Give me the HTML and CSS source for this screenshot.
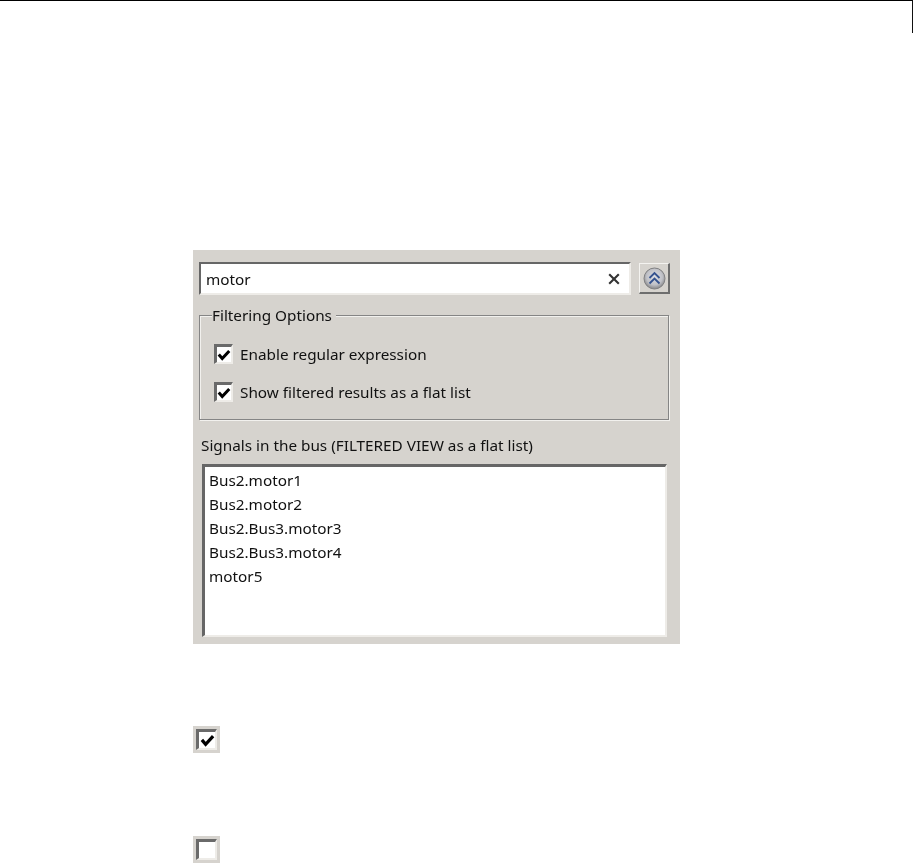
FILE: index.html
```html
<!DOCTYPE html>
<html lang="en">
<head>
    <meta charset="UTF-8">
    <title>Signals in the bus</title>
    <link rel="stylesheet" href="styles.css">
</head>
<body>
    <header class="page-head"></header>
    <main class="content">
        <div class="panel">
            <div class="search-row">
                <div class="search-box">
                    <span class="search-text">motor</span>
                    <svg class="clear-icon" width="12" height="12" viewBox="0 0 12 12">
                        <path d="M1.2 1.2 L10.8 10.8 M10.8 1.2 L1.2 10.8" stroke="#333" stroke-width="2.1" fill="none"/>
                    </svg>
                </div>
                <button class="collapse-btn">
                    <svg width="23" height="23" viewBox="0 0 23 23">
                        <defs>
                            <radialGradient id="knob" cx="50%" cy="42%" r="58%">
                                <stop offset="0" stop-color="#dcdde3"/>
                                <stop offset="0.65" stop-color="#c0c1c7"/>
                                <stop offset="1" stop-color="#858587"/>
                            </radialGradient>
                        </defs>
                        <circle cx="11.5" cy="11.5" r="10.5" fill="url(#knob)" stroke="#808082" stroke-width="1"/>
                        <path d="M6.5 11 L11.5 6 L16.5 11 M6.5 16.5 L11.5 11.5 L16.5 16.5" stroke="#34528f" stroke-width="1.8" fill="none"/>
                    </svg>
                </button>
            </div>

            <fieldset class="options">
                <legend>Filtering Options</legend>
                <label class="option">
                    <span class="check check-small">
                        <svg width="14" height="14" viewBox="0 0 12 12"><path d="M1.5 5.5 L4.5 9 L10.5 2.5" stroke="#000" stroke-width="2.6" fill="none"/></svg>
                    </span>
                    Enable regular expression
                </label>
                <label class="option">
                    <span class="check check-small">
                        <svg width="14" height="14" viewBox="0 0 12 12"><path d="M1.5 5.5 L4.5 9 L10.5 2.5" stroke="#000" stroke-width="2.6" fill="none"/></svg>
                    </span>
                    Show filtered results as a flat list
                </label>
            </fieldset>

            <div class="list-title">Signals in the bus (FILTERED VIEW as a flat list)</div>
            <ul class="signal-list">
                <li>Bus2.motor1</li>
                <li>Bus2.motor2</li>
                <li>Bus2.Bus3.motor3</li>
                <li>Bus2.Bus3.motor4</li>
                <li>motor5</li>
            </ul>
        </div>

        <div class="big-check big-check-first">
            <span class="check">
                <svg width="15" height="15" viewBox="0 0 12 12"><path d="M1.5 5.5 L4.5 9 L10.5 2.5" stroke="#000" stroke-width="2.6" fill="none"/></svg>
            </span>
        </div>
        <div class="big-check big-check-second">
            <span class="check"></span>
        </div>
    </main>
</body>
</html>
```

FILE: styles.css
```css
html, body {
    margin: 0;
    height: 863px;
    overflow: hidden;
    background-color: #fff;
}

body {
    font-family: "Noto Sans", sans-serif;
    color: #111;
}

.page-head {
    box-sizing: border-box;
    height: 33px;
    border-top: 1px solid #000;
    border-right: 1px solid #111;
}

.content {
    padding-left: 193px;
}

.panel {
    box-sizing: border-box;
    width: 487px;
    height: 394px;
    margin-top: 217px;
    padding: 12px 10px 0 6px;
    background-color: #d6d3ce;
    overflow: hidden;
    font-size: 15.3px;
    filter: blur(0.35px);
}

.search-row {
    display: flex;
    align-items: center;
    gap: 8px;
}

.search-box {
    box-sizing: border-box;
    width: 433px;
    height: 33px;
    display: flex;
    align-items: center;
    justify-content: space-between;
    padding: 0 9px 0 5px;
    background-color: #fff;
    border-top: 2px solid #666;
    border-left: 2px solid #666;
    border-right: 2px solid #eeece8;
    border-bottom: 2px solid #eeece8;
}

.collapse-btn {
    box-sizing: border-box;
    width: 31px;
    height: 31px;
    padding: 0;
    display: flex;
    align-items: center;
    justify-content: center;
    background-color: #d6d3ce;
    border-top: 1px solid #f4f3f0;
    border-left: 1px solid #f4f3f0;
    border-right: 2px solid #6e6e6e;
    border-bottom: 2px solid #6e6e6e;
}

.options {
    box-sizing: border-box;
    width: 470px;
    height: 113px;
    margin: 12px 0 0 0;
    padding: 20px 0 0 14px;
    border: 1px solid #858585;
    box-shadow: inset 1px 1px #f2f1ee, 1px 1px #f2f1ee;
}

.options legend {
    padding: 0 4px 0 0;
    margin-left: -2px;
    line-height: 17px;
    background-color: #d6d3ce;
}

.option {
    display: flex;
    align-items: center;
    gap: 7px;
    height: 20px;
    margin-bottom: 18px;
}

.check {
    box-sizing: border-box;
    display: flex;
    align-items: center;
    justify-content: center;
    width: 21px;
    height: 21px;
    background-color: #fff;
    border-top: 3px solid #6a6a6a;
    border-left: 3px solid #6a6a6a;
    border-right: 2px solid #eeece8;
    border-bottom: 2px solid #eeece8;
}

.check-small {
    width: 19px;
    height: 20px;
    flex: none;
}

.list-title {
    margin: 15px 0 0 2px;
    height: 20px;
    line-height: 20px;
}

.signal-list {
    box-sizing: border-box;
    width: 465px;
    height: 173px;
    margin: 9px 0 0 3px;
    padding: 1px 0 0 4px;
    list-style: none;
    background-color: #fff;
    border-top: 3px solid #666;
    border-left: 3px solid #666;
    border-right: 2px solid #eeece8;
    border-bottom: 2px solid #eeece8;
}

.signal-list li {
    height: 24px;
    line-height: 24px;
}

.big-check {
    box-sizing: border-box;
    width: 27px;
    height: 27px;
    padding: 3px;
    background-color: #d6d3ce;
}

.big-check-first {
    margin-top: 82px;
}

.big-check-second {
    margin-top: 83px;
}
```
